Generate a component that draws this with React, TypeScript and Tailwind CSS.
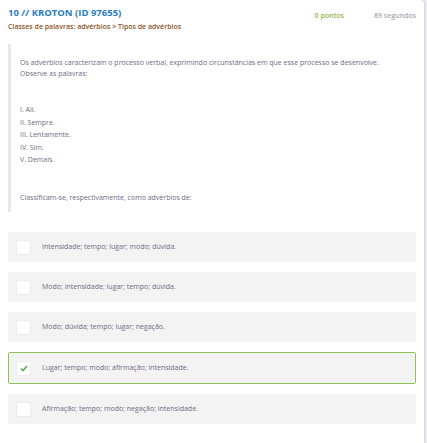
import React from 'react';

const statements = ['I. Ali.', 'II. Sempre.', 'III. Lentamente.', 'IV. Sim.', 'V. Demais.'];

const options = [
  { text: 'Intensidade; tempo; lugar; modo; dúvida.', checked: false },
  { text: 'Modo; intensidade; lugar; tempo; dúvida.', checked: false },
  { text: 'Modo; dúvida; tempo; lugar; negação.', checked: false },
  { text: 'Lugar; tempo; modo; afirmação; intensidade.', checked: true },
  { text: 'Afirmação; tempo; modo; negação; intensidade.', checked: false },
];

const App: React.FC = () => {
  return (
    <div className="flex w-[427px] h-[443px] bg-[#e9eaf0]" style={{ fontFamily: '"Open Sans", "Liberation Sans", sans-serif' }}>
      <div className="w-[424px] h-full bg-white rounded-tr-[4px] shadow-[1px_0_1px_rgba(0,0,0,0.08)] pl-2 pr-2">
        {/* header */}
        <div className="flex items-start pt-[5px]">
          <div className="flex-1">
            <p className="text-[9.5px] font-bold text-[#2a7ec0] leading-[16px]">10 // KROTON (ID 97655)</p>
            <p className="text-[7px] font-semibold text-[#8a5324] leading-[10px] mt-[1px]">
              Classes de palavras: advérbios &gt; Tipos de advérbios
            </p>
          </div>
          <div className="flex gap-[30px] pt-[6px] pr-0 text-[7px] font-semibold">
            <span className="text-[#8db84a]">0 pontos</span>
            <span className="text-[#a8a8b4]">89 segundos</span>
          </div>
        </div>

        {/* question */}
        <div className="mt-[12px] border-l-[3px] border-[#e8e8ec] h-[168px] pl-[9px] pt-[13px] text-[7px] text-[#6f6a86] leading-[11px]">
          <p>Os advérbios caracterizam o processo verbal, exprimindo circunstâncias em que esse processo se desenvolve.</p>
          <p>Observe as palavras:</p>
          <div className="mt-[25px] flex flex-col gap-[1.5px]">
            {statements.map((s) => (
              <p key={s}>{s}</p>
            ))}
          </div>
          <p className="mt-[27px]">Classificam-se, respectivamente, como advérbios de:</p>
        </div>

        {/* options */}
        <div className="mt-[20px] flex flex-col gap-[10px] w-[408px]">
          {options.map((o) => (
            <div
              key={o.text}
              className={`flex items-center h-[30px] rounded-[2px] bg-[#f3f3f3] ${o.checked ? 'border border-[#8dc253] h-[32px] pl-[7px]' : 'pl-[8px]'}`}
            >
              <div className="w-[15px] h-[15px] bg-white rounded-[2px] border border-[#ececec] flex items-center justify-center">
                {o.checked && (
                  <svg width="8" height="7" viewBox="0 0 8 7">
                    <path d="M1 3.6 L3 5.5 L7 1.2" fill="none" stroke="#5cb85c" strokeWidth="1.8" />
                  </svg>
                )}
              </div>
              <span className="ml-[11px] text-[7px] text-[#6f6a86]">{o.text}</span>
            </div>
          ))}
        </div>
      </div>
    </div>
  );
};

export default App;
